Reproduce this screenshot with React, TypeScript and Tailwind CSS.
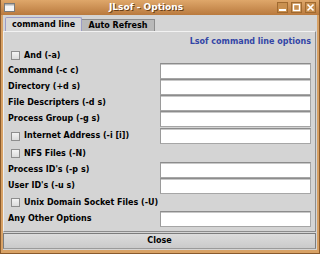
import React from "react";

function Check() {
  return (
    <span className="inline-block w-[9px] h-[9px] border border-[#8e8e8e] bg-gradient-to-b from-[#f4f4f4] to-[#dcdcdc] mr-[4px] shrink-0" />
  );
}

function Field() {
  return (
    <div className="h-[16px] w-[151px] bg-white border border-[#a6a6a6] border-t-[#8c8c8c] border-l-[#9a9a9a] shadow-[inset_0_1px_0_#c8c8c8]" />
  );
}

type Row = { label: string; check?: boolean; field?: boolean; h: string };

const rows: Row[] = [
  { label: "And (-a)", check: true, h: "h-[15px]" },
  { label: "Command (-c c)", field: true, h: "h-[16px]" },
  { label: "Directory (+d s)", field: true, h: "h-[16px]" },
  { label: "File Descripters (-d s)", field: true, h: "h-[16px]" },
  { label: "Process Group (-g s)", field: true, h: "h-[16px]" },
  { label: "Internet Address (-i [i])", check: true, field: true, h: "h-[18px]" },
  { label: "NFS Files (-N)", check: true, h: "h-[17px]" },
  { label: "Process ID's (-p s)", field: true, h: "h-[16px]" },
  { label: "User ID's (-u s)", field: true, h: "h-[16px]" },
  { label: "Unix Domain Socket Files (-U)", check: true, h: "h-[17px]" },
  { label: "Any Other Options", field: true, h: "h-[16px]" },
];

export default function App() {
  return (
    <div className="w-[320px] h-[254px] bg-[#d8a266] flex flex-col font-['DejaVu_Sans',sans-serif] font-bold text-[8px] text-black overflow-hidden border-x border-b border-[#8a5a2c]">
      {/* title bar */}
      <div className="h-[15px] shrink-0 flex items-center bg-gradient-to-b from-[#dfa76a] to-[#b97a3e] px-[2px]">
        <svg width="11" height="9" viewBox="0 0 11 9" className="ml-[1px]">
          <rect x="0.5" y="0.5" width="10" height="8" fill="#f6f6f6" stroke="#7a7a7a" />
          <rect x="1" y="1" width="9" height="1.5" fill="#b0b0b0" />
        </svg>
        <div className="flex-1 flex justify-center">
          <span className="text-white text-[9px] [text-shadow:1px_1px_0_#6a4018]">JLsof - Options</span>
        </div>
        <div className="flex items-center gap-[3px] mr-[1px]">
          <svg width="11" height="11" viewBox="0 0 11 11">
            <rect x="0.5" y="0.5" width="10" height="10" fill="#c99050" stroke="#a06a30" />
            <rect x="2" y="7" width="7" height="2" fill="#fff" />
          </svg>
          <svg width="11" height="11" viewBox="0 0 11 11">
            <rect x="0.5" y="0.5" width="10" height="10" fill="#c99050" stroke="#a06a30" />
            <rect x="2.5" y="2.5" width="6" height="6" fill="none" stroke="#fff" strokeWidth="1.4" />
          </svg>
          <svg width="11" height="11" viewBox="0 0 11 11">
            <rect x="0.5" y="0.5" width="10" height="10" fill="#c99050" stroke="#a06a30" />
            <path d="M2.5 2.5 L8.5 8.5 M8.5 2.5 L2.5 8.5" stroke="#fff" strokeWidth="1.6" />
          </svg>
        </div>
      </div>

      {/* content */}
      <div className="flex-1 mx-[2px] mb-[3px] bg-[#d4d4d4] flex flex-col">
        {/* tabs */}
        <div className="h-[16px] shrink-0 flex items-end pl-[2px]">
          <div className="h-[14px] w-[77px] flex items-center justify-center border border-b-0 border-[#9c9cc6] bg-[#d8d8d8] rounded-t-[2px]">
            command line
          </div>
          <div className="h-[12px] w-[73px] flex items-center justify-center border border-b-0 border-l-0 border-[#8c8c8c] bg-[#b9b9b9]">
            Auto Refresh
          </div>
        </div>

        {/* panel */}
        <div className="h-[201px] shrink-0 mr-[1px] border-t border-t-[#f2f2f2] border-r border-r-[#8c8c8c] border-b border-b-[#8c8c8c] border-l border-l-[#eeeeee] flex flex-col pt-[4px] pl-[4px] pr-[4px]">
          <div className="h-[12px] flex items-center justify-end text-[#3346a6]">
            Lsof command line options
          </div>
          {rows.map((r) => (
            <div key={r.label} className={`${r.h} flex items-center justify-between`}>
              <div className={`flex items-center ${r.check ? "pl-[3px]" : ""}`}>
                {r.check && <Check />}
                <span>{r.label}</span>
              </div>
              {r.field && <Field />}
            </div>
          ))}
        </div>

        {/* close button */}
        <div className="mt-[1px] mr-[1px] h-[16px] flex items-center justify-center border border-[#7c7c7c] border-b-[#9a9a9a] bg-gradient-to-b from-[#dcdcdc] to-[#cacaca]">
          Close
        </div>
      </div>
    </div>
  );
}
